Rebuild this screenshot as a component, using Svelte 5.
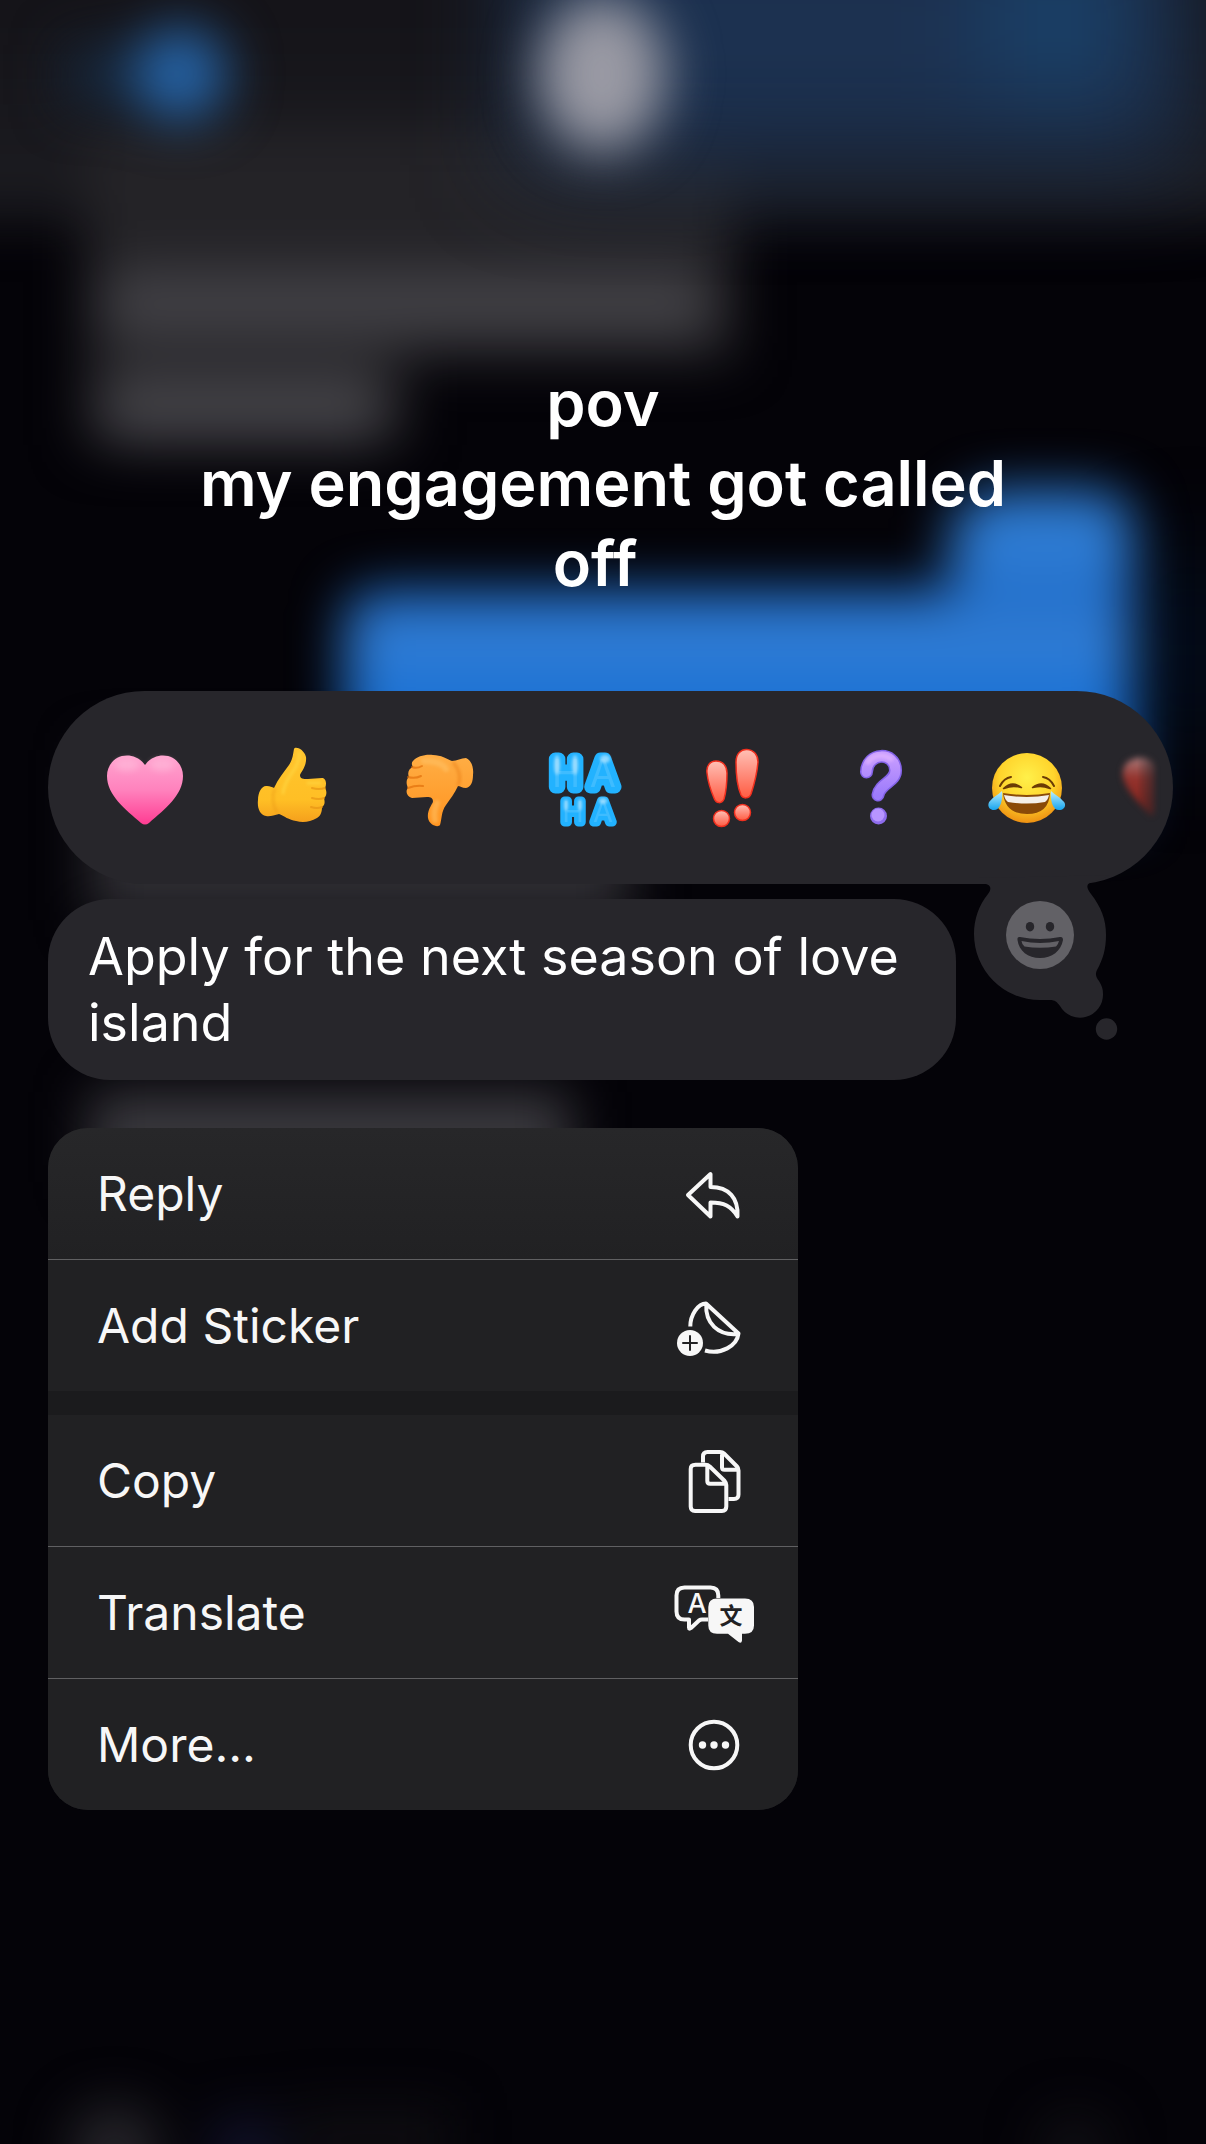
<script>
	const reactions = [
		{ name: 'heart', label: 'Love' },
		{ name: 'up', label: 'Like' },
		{ name: 'down', label: 'Dislike' },
		{ name: 'haha', label: 'Laugh' },
		{ name: 'bang', label: 'Emphasise' },
		{ name: 'question', label: 'Question' },
		{ name: 'joy', label: 'Tears of joy' },
		{ name: 'next', label: 'Red heart' }
	];

	const groups = [
		[
			{ icon: 'reply', title: 'Reply' },
			{ icon: 'sticker', title: 'Add Sticker' }
		],
		[
			{ icon: 'copy', title: 'Copy' },
			{ icon: 'translate', title: 'Translate' },
			{ icon: 'more', title: 'More...' }
		]
	];

	let selected = $state('');
</script>

<!-- Reaction artwork, 80 x 80 -->
{#snippet reaction(name)}
	<svg class="emoji" viewBox="0 0 80 80" aria-hidden="true">
		{#if name === 'heart'}
			<path fill="url(#pink)" d="M40 17C45 10 52 7.500 58 7.500C70 7.500 78 17 78 28C78 47 60 61 44 75Q40 78 36 75C20 61 2 47 2 28C2 17 10 7.500 22 7.500C28 7.500 35 10 40 17Z" />
			<g fill="#ffc2de" opacity=".5" filter="url(#smudge)">
				<ellipse cx="22" cy="17" rx="12" ry="6" />
				<ellipse cx="57" cy="17" rx="12" ry="6" />
			</g>
		{:else if name === 'up'}
			<path fill="url(#yellow)" d="M42 1C43-2 52 1 54 9C55 18 49 24 48 27C48 31 51 31 56 31L70 30C74 30 75 36 73 40C75 43 75 48 72 50C73 54 73 57 70 59C70 63 69 68 65 70C58 74 51 75 44 73C37 72 32 68 27 66C22 67 18 69 14 68C8 67 5 60 6 52C6 44 10 37 15 38C18 38 20 39 22 40C26 31 32 24 37 17C41 11 41 6 42 1Z" />
			<path class="crease" stroke="#e79414" d="M60 40Q67 42 73 40M60 50Q67 52 72 50M59 59Q65 61 70 59" />
			<path fill="none" stroke="#e79414" stroke-width="3" opacity=".4" filter="url(#soft)" d="M23 40Q18 51 25 65" />
			<path fill="none" stroke="#ffe04d" stroke-width="3" stroke-linecap="round" opacity=".5" filter="url(#soft)" d="M47 5Q48 15 39 26Q32 37 31 45M56 35H68" />
		{:else if name === 'down'}
			<path fill="url(#orange)" d="M14 13C18 8 27 6 34 7C42 7 48 11 53 13C58 13 62 10 67 10C72 12 75 19 74 27C74 34 72 39 67 40C63 40 61 38 59 38C56 45 51 51 47 57C42 64 43 71 41 77C39 80 30 77 29 70C28 63 32 58 34 54C34 50 32 49 28 49L13 50C8 49 6 43 9 40C7 36 7 31 10 29C8 25 10 20 14 19C12 16 13 14 14 13Z" />
			<path class="crease" stroke="#e16f0b" d="M13 19Q18 21 23 18M9 29Q16 31 22 28M9 40Q17 37 24 38" />
			<path fill="none" stroke="#e16f0b" stroke-width="3" opacity=".4" filter="url(#soft)" d="M54 14Q64 26 59 38" />
			<path fill="none" stroke="#ffc469" stroke-width="6" stroke-linecap="round" opacity=".5" filter="url(#soft)" d="M25 13Q42 13 47 21M38 55Q34 64 36 72" />
		{:else if name === 'haha'}
			<text class="haha">
				<tspan x="20 59" y="39" font-size="38" stroke-width="13">HA</tspan>
				<tspan x="27 57" y="74" font-size="29" stroke-width="9">HA</tspan>
			</text>
			<g fill="#b4e6ff" opacity=".75" filter="url(#soft)">
				<ellipse cx="11" cy="17" rx="3" ry="10" />
				<ellipse cx="29" cy="17" rx="3" ry="10" />
				<ellipse cx="59" cy="11" rx="5" ry="4" />
				<ellipse cx="20" cy="57" rx="2" ry="6" />
				<ellipse cx="34" cy="57" rx="2" ry="6" />
				<ellipse cx="57" cy="53" rx="4" ry="3" />
			</g>
		{:else if name === 'bang'}
			<g fill="url(#coral)" stroke="#f0301f" stroke-width="1.500">
				<path d="M14 25C13 18 17 13 23 13C30 13 34 18 34 25C34 35 33 44 31 51C29 56 23 56 21 50C18 43 15 34 14 25Z" />
				<path d="M43 14C43 6 48 1 54 1.500C61 2 65 7 65 14C64 26 61 37 58 46C56 51 50 51 48 47C44 38 43 26 43 14Z" />
				<circle cx="28.500" cy="70.500" r="8" />
				<circle cx="49.500" cy="64.500" r="8" />
			</g>
		{:else if name === 'question'}
			<g fill="none" stroke-linecap="round">
				<path stroke="#8463e8" stroke-width="13" d="M26.500 24C27 4 55 3 55.500 22C56 34 40 35 38 47" />
				<path stroke="url(#violet)" stroke-width="10" d="M26.500 24C27 4 55 3 55.500 22C56 34 40 35 38 47" />
				<path stroke="#e2b5ff" stroke-width="5" opacity=".7" filter="url(#soft)" d="M28 14Q38 3 51 11" />
			</g>
			<circle cx="38.500" cy="68" r="8.500" fill="#8d6cec" />
			<circle cx="38" cy="67" r="6.500" fill="#b795ff" />
		{:else if name === 'joy'}
			<circle cx="40" cy="40" r="35" fill="url(#face)" />
			<g fill="none" stroke="#6b3b05" stroke-linecap="round" stroke-width="2">
				<path d="M13 38Q17 30 24 29M56 29Q63 30 67 38" />
			</g>
			<path fill="#6b3b05" d="M16 40Q25 31 35 39Q36 41 33 40Q25 38 18 41Q15 42 16 40ZM45 39Q55 31 64 40Q65 42 62 41Q55 38 47 40Q44 41 45 39Z" />
			<path fill="#8a4a08" d="M16 45Q40 49 63 45Q62 66 40 66Q18 66 16 45Z" />
			<path fill="#f4efe9" d="M17 47Q40 51 62 47Q61 52 58 54Q40 57 21 54Q18 52 17 47Z" />
			<path fill="url(#tear)" d="M15 43C16 50 14 62 7 62C1 62 0 56 3 53C6 49 11 47 15 43ZM64 43C63 50 65 62 72 62C78 62 80 56 76 53C73 49 68 47 64 43Z" />
		{:else}
			<path fill="url(#fading)" filter="url(#smudge)" d="M23 18C18 10 8 8 0 11C-9 13-12 21-11 29C-7 45 7 56 17 67Q23 70 23 58Z" />
		{/if}
	</svg>
{/snippet}

<!-- Menu icons, 80 x 80 -->
{#snippet glyph(icon)}
	<svg class="glyph" viewBox="0 0 80 80" aria-hidden="true">
		{#if icon === 'reply'}
			<path d="M14 41L36.500 20V33C55 33 64.500 44 63.500 62.500C57 52 50 48.500 36.500 48.500V62.500Z" />
		{:else if icon === 'sticker'}
			<path d="M16.300 40.500C16.300 29 24 17.500 32 17.500L64.500 47.500C63 60 47 69 31 64.500M32.300 18C31 37 44 50 64 48" />
			<circle class="solid" cx="16" cy="57" r="13" />
			<path class="cut" d="M9 57H23M16 50V64" />
		{:else if icon === 'copy'}
			<path d="M29 21.500V15.500Q29 11 33.500 11H46Q48.500 11 50 12.500L63 25.500Q64.500 27 64.500 29.500V53.500Q64.500 58 60 58H54.500M48 12V26.500Q48 28.700 50.500 28.700H64" />
			<path d="M21.500 23.700H31.500Q34 23.700 35.500 25.300L50.700 40Q52.300 41.700 52.300 44V65.500Q52.300 70 48 70H21Q16.700 70 16.700 65.500V28Q16.700 23.700 21.500 23.700ZM33.300 25V40Q33.300 42.700 36 42.700H51.500" />
		{:else if icon === 'translate'}
			<path d="M44.300 25V22.500Q44.300 14.500 36.500 14.500H10.500Q2.500 14.500 2.500 22.500V38.500Q2.500 46.500 10.500 46.500H15V54.500Q15 56.500 17 55L25 47.500Q26.500 46.500 28 46.500H34" />
			<text x="23" y="40" font-size="27">A</text>
			<path class="solid" d="M43 25.500H71Q80 25.500 80 34V52.500Q80 60.700 71 60.700H68V67.500Q67.500 71 64.500 69L54 60.700H43Q34.300 60.700 34.300 52.500V34Q34.300 25.500 43 25.500Z" />
			<text class="han" x="57" y="51" font-size="23">文</text>
		{:else}
			<circle cx="40" cy="40" r="23.300" />
			<g class="solid">
				<circle cx="28.500" cy="40" r="3.700" />
				<circle cx="40" cy="40" r="3.700" />
				<circle cx="51.500" cy="40" r="3.700" />
			</g>
		{/if}
	</svg>
{/snippet}

<main>
	<!-- Blurred conversation -->
	<svg class="backdrop" viewBox="0 0 1206 2144" preserveAspectRatio="none" color-interpolation-filters="sRGB" aria-hidden="true">
		<defs>
			<filter id="blur" x="-50%" y="-50%" width="200%" height="200%"><feGaussianBlur stdDeviation="26" /></filter>
			<filter id="wide" x="-50%" y="-50%" width="200%" height="200%"><feGaussianBlur stdDeviation="50" /></filter>
			<filter id="soft" x="-50%" y="-50%" width="200%" height="200%"><feGaussianBlur stdDeviation="1.500" /></filter>
			<filter id="smudge" x="-50%" y="-50%" width="200%" height="200%"><feGaussianBlur stdDeviation="3" /></filter>
			<linearGradient id="bar" x1="0" y1="0" x2="0" y2="1">
				<stop offset=".3" stop-color="#141318" />
				<stop offset="1" stop-color="#1c1c21" />
			</linearGradient>
			<linearGradient id="sent" x1="0" y1="0" x2="0" y2="1">
				<stop offset="0" stop-color="#2c7ad2" />
				<stop offset=".2" stop-color="#2f7cd3" />
				<stop offset=".32" stop-color="#1f6cc8" />
				<stop offset=".46" stop-color="#347fd5" />
				<stop offset=".62" stop-color="#1b71d4" />
			</linearGradient>
			<linearGradient id="pink" x1="0" y1="0" x2="0" y2="1">
				<stop offset="0" stop-color="#ffa5d0" />
				<stop offset=".5" stop-color="#ff82bd" />
				<stop offset="1" stop-color="#ff3c92" />
			</linearGradient>
			<linearGradient id="yellow" x1="0" y1="0" x2="0" y2="1">
				<stop offset="0" stop-color="#ffc52e" />
				<stop offset=".7" stop-color="#ffbf25" />
				<stop offset="1" stop-color="#f5a01c" />
			</linearGradient>
			<linearGradient id="orange" x1="0" y1="0" x2="0" y2="1">
				<stop offset="0" stop-color="#ffae45" />
				<stop offset="1" stop-color="#ff9420" />
			</linearGradient>
			<linearGradient id="coral" x1="0" y1="0" x2="0" y2="1">
				<stop offset="0" stop-color="#ffc0b5" />
				<stop offset=".5" stop-color="#ff8d7c" />
				<stop offset="1" stop-color="#ff5c42" />
			</linearGradient>
			<linearGradient id="violet" x1="0" y1="0" x2="0" y2="1">
				<stop offset="0" stop-color="#c79cff" />
				<stop offset="1" stop-color="#9c7bfb" />
			</linearGradient>
			<radialGradient id="face" cx=".5" cy=".35" r=".65">
				<stop offset="0" stop-color="#fff04a" />
				<stop offset=".6" stop-color="#ffd42c" />
				<stop offset="1" stop-color="#ee9012" />
			</radialGradient>
			<linearGradient id="tear" x1="0" y1="0" x2="0" y2="1">
				<stop offset="0" stop-color="#bdf0ff" />
				<stop offset="1" stop-color="#16a4ee" />
			</linearGradient>
			<linearGradient id="fading" x1="0" y1="0" x2="0" y2="1">
				<stop offset="0" stop-color="#a87a7a" />
				<stop offset=".35" stop-color="#94332d" />
				<stop offset="1" stop-color="#7d1f18" />
			</linearGradient>
		</defs>
		<g filter="url(#blur)">
			<rect x="-100" y="-100" width="1406" height="320" fill="url(#bar)" />
			<path fill="#242327" d="M85 130H735V360H405V445H85Z" />
			<rect x="100" y="270" width="615" height="68" rx="30" fill="#414045" />
			<rect x="100" y="375" width="285" height="70" rx="30" fill="#434247" />
			<rect x="90" y="750" width="540" height="170" fill="#2f2e33" />
			<rect x="90" y="1092" width="480" height="90" fill="#3a393e" />
			<circle cx="115" cy="2150" r="45" fill="#26252a" />
			<circle cx="245" cy="2150" r="35" fill="#12132c" />
			<rect x="290" y="2110" width="160" height="60" fill="#0e0d11" />
			<circle cx="1075" cy="2150" r="35" fill="#111015" />
		</g>
		<g filter="url(#wide)">
			<path fill="#1c3150" d="M520-100H1190V165H520Z" />
			<path fill="#1a426b" d="M990-60H1120V90H990Z" />
			<rect x="1160" y="560" width="60" height="180" fill="#03142b" />
		</g>
		<g filter="url(#blur)">
			<ellipse cx="602" cy="74" rx="64" ry="78" fill="#9a9aa4" />
			<rect x="65" y="45" width="70" height="60" fill="#16263a" />
			<circle cx="180" cy="74" r="47" fill="#2563a6" />
			<path fill="url(#sent)" d="M985 490H1100Q1133 495 1133 530V820H345V615Q350 590 385 590H950V520Z" />
		</g>
	</svg>

	<h1 class="caption">
		pov<br />
		my engagement got called<br />
		off&nbsp;
	</h1>

	<!-- Reactions -->
	<div class="reactions">
		<div class="strip">
			{#each reactions as item}
				<button
					type="button"
					aria-label={item.label}
					aria-pressed={selected === item.name}
					onclick={() => (selected = item.name)}
				>
					{@render reaction(item.name)}
				</button>
			{/each}
		</div>
		<button class="picker" type="button" aria-label="Choose emoji">
			<svg viewBox="0 0 160 164" aria-hidden="true">
				<path fill="#27262b" d="M8-2V4H14C21 4 22 9 18 14C9 25 4 39 4 54A66 66 0 0 0 70 120H80C85 120 87 122 90 126A23 23 0 0 0 133 114C133 109 132 106 129 101C126 97 125 94 127 90C133 79 136 69 136 55C136 39 131 27 121 14C116 7 116 4 122 2C126 0 134-1 140-5Z" />
				<circle cx="136.500" cy="149" r="10.700" fill="#27262b" />
				<circle cx="70" cy="55" r="34" fill="#626166" />
				<g fill="#27262b">
					<ellipse cx="60" cy="46.700" rx="4.200" ry="4.800" />
					<ellipse cx="80" cy="46.700" rx="4.200" ry="4.800" />
					<path d="M50 57Q70 61 90 57Q93 56.500 93 60C91 71 82 78 70 78C58 78 49 71 47.500 60Q47 56.500 50 57Z" />
				</g>
				<path fill="#626166" d="M51.500 61Q70 65 89 61Q88 65 86 66.500Q70 69 54.500 66.500Q52 65 51.500 61Z" />
			</svg>
		</button>
	</div>
	<!-- xReactions -->

	<p class="message">Apply for the next season of love island</p>

	<!-- Menu -->
	<nav class="menu">
		{#each groups as group}
			<ul>
				{#each group as item}
					<li>
						<button type="button">
							<span>{item.title}</span>
							{@render glyph(item.icon)}
						</button>
					</li>
				{/each}
			</ul>
		{/each}
	</nav>
	<!-- xMenu -->
</main>

<style>
	:global(body) {
		margin: 0;
		background: #040308;
	}

	main {
		box-sizing: border-box;
		min-height: 100vh;
		padding: 363px 33px 48px 48px;
		position: relative;
		overflow: hidden;
		font-family: Inter, 'Liberation Sans', sans-serif;
		color: #fff;
	}

	button {
		margin: 0;
		padding: 0;
		border: 0;
		background: none;
		font: inherit;
		color: inherit;
		cursor: pointer;
	}

	svg {
		display: block;
	}

	.backdrop {
		position: absolute;
		top: 0;
		left: 0;
		width: 100%;
		height: 100%;
	}

	.caption {
		margin: 0 0 88px;
		padding-right: 15px;
		position: relative;
		font-size: 63px;
		line-height: 80px;
		font-weight: 600;
		text-align: center;
	}

	.reactions {
		position: relative;
		z-index: 1;
		height: 193px;
		border-radius: 97px;
		background: #27262b;
	}

	.strip {
		height: 100%;
		margin-right: 12px;
		padding-left: 57px;
		display: flex;
		align-items: center;
		gap: 67px;
		overflow: hidden;
		mask-image: linear-gradient(to left, transparent, #000 24px);
	}

	.strip button {
		flex: none;
	}

	.emoji,
	.glyph {
		width: 80px;
		height: 80px;
		overflow: visible;
	}

	.crease {
		fill: none;
		stroke-width: 2;
		stroke-linecap: round;
		opacity: 0.7;
	}

	.haha {
		font-family: Inter, sans-serif;
		font-weight: 400;
		text-anchor: middle;
		fill: #3fbcff;
		stroke: #22b2ff;
		stroke-linejoin: round;
		paint-order: stroke;
	}

	.picker {
		position: absolute;
		top: 189px;
		right: 43px;
		width: 160px;
	}

	.picker svg {
		overflow: visible;
	}

	.message {
		box-sizing: border-box;
		max-width: 908px;
		margin: 15px 0 48px;
		padding: 25px 40px 24px;
		position: relative;
		border-radius: 62px;
		background: #27262b;
		font-size: 52px;
		line-height: 66px;
	}

	.menu {
		max-width: 750px;
		position: relative;
		display: flex;
		flex-direction: column;
		gap: 24px;
		border-radius: 40px;
		background: #1b1b1d;
		overflow: hidden;
		font-size: 48px;
		color: #f7f7f7;
	}

	.menu ul {
		margin: 0;
		padding: 0;
		background: #212123;
		list-style: none;
	}

	.menu ul:first-child {
		background: linear-gradient(#272729, #212123 50%);
	}

	.menu li + li {
		border-top: 1px solid #606062;
	}

	.menu button {
		box-sizing: border-box;
		width: 100%;
		height: 131px;
		padding: 0 44px 0 49px;
		display: flex;
		align-items: center;
		justify-content: space-between;
	}

	.glyph {
		fill: none;
		stroke: #f7f7f7;
		stroke-width: 4;
		stroke-linecap: butt;
		stroke-linejoin: round;
	}

	.glyph .solid {
		fill: #f7f7f7;
		stroke: none;
	}

	.glyph .cut {
		stroke: #212123;
		stroke-width: 2;
		stroke-linecap: round;
	}

	.glyph text {
		fill: #f7f7f7;
		stroke: none;
		font-weight: 500;
		text-anchor: middle;
	}

	.glyph .han {
		fill: #212123;
		font-family: 'Noto Sans CJK SC', sans-serif;
		font-weight: 700;
	}
</style>
